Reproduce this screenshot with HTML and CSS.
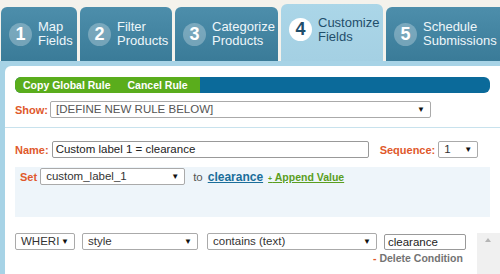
FILE: index.html
```html
<!DOCTYPE html>
<html lang="en">
<head>
  <meta charset="UTF-8" />
  <title>Customize Fields</title>
  <link rel="stylesheet" href="styles.css">
</head>
<body>
  <div class="tabs">
    <div class="tab t1"><span class="num">1</span><span class="label">Map<br>Fields</span></div>
    <div class="tab t2"><span class="num">2</span><span class="label">Filter<br>Products</span></div>
    <div class="tab t3"><span class="num">3</span><span class="label">Categorize<br>Products</span></div>
    <div class="tab t4 active"><span class="num">4</span><span class="label">Customize<br>Fields</span></div>
    <div class="tab t5"><span class="num">5</span><span class="label">Schedule<br>Submissions</span></div>
  </div>

  <div class="frame">
    <div class="panel">
      <div class="actions">
        <div class="green">
          <span>Copy Global Rule</span>
          <span>Cancel Rule</span>
        </div>
      </div>

      <div class="row show-row">
        <span class="lbl">Show:</span>
        <div class="sel sel-show">[DEFINE NEW RULE BELOW]<i>▼</i></div>
      </div>

      <div class="divider"></div>

      <div class="row name-row">
        <span class="lbl">Name:</span>
        <div class="inp inp-name">Custom label 1 = clearance</div>
        <span class="lbl seq">Sequence:</span>
        <div class="sel sel-seq">1<i>▼</i></div>
      </div>

      <div class="setbox">
        <div class="row">
          <span class="lbl set">Set</span>
          <div class="sel sel-field">custom_label_1<i>▼</i></div>
          <span class="to">to</span>
          <a class="val">clearance</a>
          <a class="append"><small>+</small> Append Value</a>
        </div>
      </div>

      <div class="cond">
        <div class="row">
          <div class="sel sel-where">WHERI<i>▼</i></div>
          <div class="sel sel-attr">style<i>▼</i></div>
          <div class="sel sel-op">contains (text)<i>▼</i></div>
          <div class="inp inp-val">clearance</div>
        </div>
        <div class="delete"><b>-</b> Delete Condition</div>
        <div class="scroll"><span class="up"></span></div>
      </div>
    </div>
  </div>
</body>
</html>
```

FILE: styles.css
```css
* { box-sizing: border-box; }
body {
  margin: 0;
  width: 500px;
  height: 274px;
  overflow: hidden;
  background: #f4f2ec;
  font-family: "Liberation Sans", Arial, sans-serif;
  font-size: 12px;
  color: #333;
}

/* tabs */
.tabs {
  display: flex;
  align-items: flex-end;
  gap: 3px;
  height: 61px;
  padding-left: 1px;
}

.tab {
  display: flex;
  align-items: center;
  height: 54px;
  padding-left: 8px;
  border-radius: 6px 6px 0 0;
  background: linear-gradient(#4d8eab, #3a7b98);
  color: #eef6fa;
  line-height: 14px;
  font-size: 13px;
  white-space: nowrap;
  overflow: hidden;
}

.t1 { width: 76px; }
.t2 { width: 92px; }
.t3 { width: 103px; }
.t4 { width: 102px; }
.t5 { flex: 1; border-radius: 6px 0 0 0; }

.tab.active {
  height: 57px;
  padding-bottom: 6px;
  background: linear-gradient(#abd6e8, #a4d0e3);
  color: #1f4e6b;
}

.num {
  flex: none;
  width: 23px;
  height: 23px;
  margin-right: 6px;
  border-radius: 50%;
  background: rgba(255, 255, 255, 0.28);
  color: #fff;
  font-size: 18px;
  font-weight: bold;
  line-height: 23px;
  text-align: center;
}

.active .num {
  background: #fff;
  color: #1f4e6b;
}

/* frame + panel */
.frame {
  background: #a7d3e6;
  padding: 5px 0 0 5px;
  height: 213px;
  overflow: hidden;
}

.panel {
  height: 100%;
  background: #fff;
  border-radius: 6px 0 0 0;
  padding: 11px 10px 0 10px;
  position: relative;
  overflow: hidden;
}

.actions {
  height: 16px;
  border-radius: 6px;
  background: #0b6a9a;
  overflow: hidden;
}

.green {
  display: flex;
  gap: 17px;
  width: 185px;
  height: 16px;
  padding-left: 8px;
  background: #5aad1c;
  color: #fff;
  font-size: 10.5px;
  font-weight: bold;
  line-height: 16px;
  white-space: nowrap;
}

.row {
  display: flex;
  align-items: center;
  height: 17px;
  white-space: nowrap;
}

.lbl {
  color: #e0592c;
  font-weight: bold;
  font-size: 11px;
  margin-right: 3px;
}

.sel, .inp {
  position: relative;
  flex: none;
  height: 17px;
  border: 1px solid #aaa;
  border-radius: 2px;
  background: #fff;
  padding: 0 16px 0 5px;
  font-size: 11.5px;
  line-height: 15px;
  color: #333;
  white-space: nowrap;
  overflow: hidden;
}

.sel i {
  position: absolute;
  right: 5px;
  top: 0;
  font-style: normal;
  font-size: 8px;
  color: #111;
}

.inp { border-color: #999; padding: 0 3px; color: #222; }

.show-row { margin-top: 8px; }
.show-row .lbl { margin-right: 2px; }
.sel-show { width: 381px; color: #555; }

.divider {
  height: 1px;
  margin: 9px -10px 0 -10px;
  background: #c8e2ed;
}

.name-row { margin-top: 13px; }
.inp-name { width: 317px; }
.seq { margin-left: 11px; }
.sel-seq { width: 40px; }

.setbox {
  margin-top: 9px;
  height: 50px;
  background: #eef5fa;
  padding: 1px 0 0 5px;
}

.set { margin-right: 3px; }
.sel-field { width: 145px; }
.to { margin: 0 5px 0 8px; color: #555; font-size: 11.5px; }
.val {
  color: #1a6e9a;
  font-weight: bold;
  font-size: 12px;
  text-decoration: underline;
}
.append {
  margin-left: 5px;
  color: #5a9e1e;
  font-weight: bold;
  font-size: 10.5px;
  text-decoration: underline;
}
.append small { font-size: 7px; }

.cond { margin-top: 16px; }
.sel-where { width: 60px; }
.sel-attr { width: 116px; margin-left: 7px; }
.sel-op { width: 170px; margin-left: 9px; }
.inp-val { width: 82px; height: 16px; margin-left: 7px; }

.delete {
  margin: 2px 0 0 358px;
  color: #737373;
  font-size: 10.5px;
  font-weight: bold;
}
.delete b { color: #e0592c; }

.scroll {
  position: absolute;
  right: 0;
  top: 167px;
  width: 23px;
  height: 60px;
  background: #f0f0f0;
}
.up {
  position: absolute;
  left: 8px;
  top: 5px;
  border-left: 3px solid transparent;
  border-right: 3px solid transparent;
  border-bottom: 4px solid #b5b5b5;
}
```
